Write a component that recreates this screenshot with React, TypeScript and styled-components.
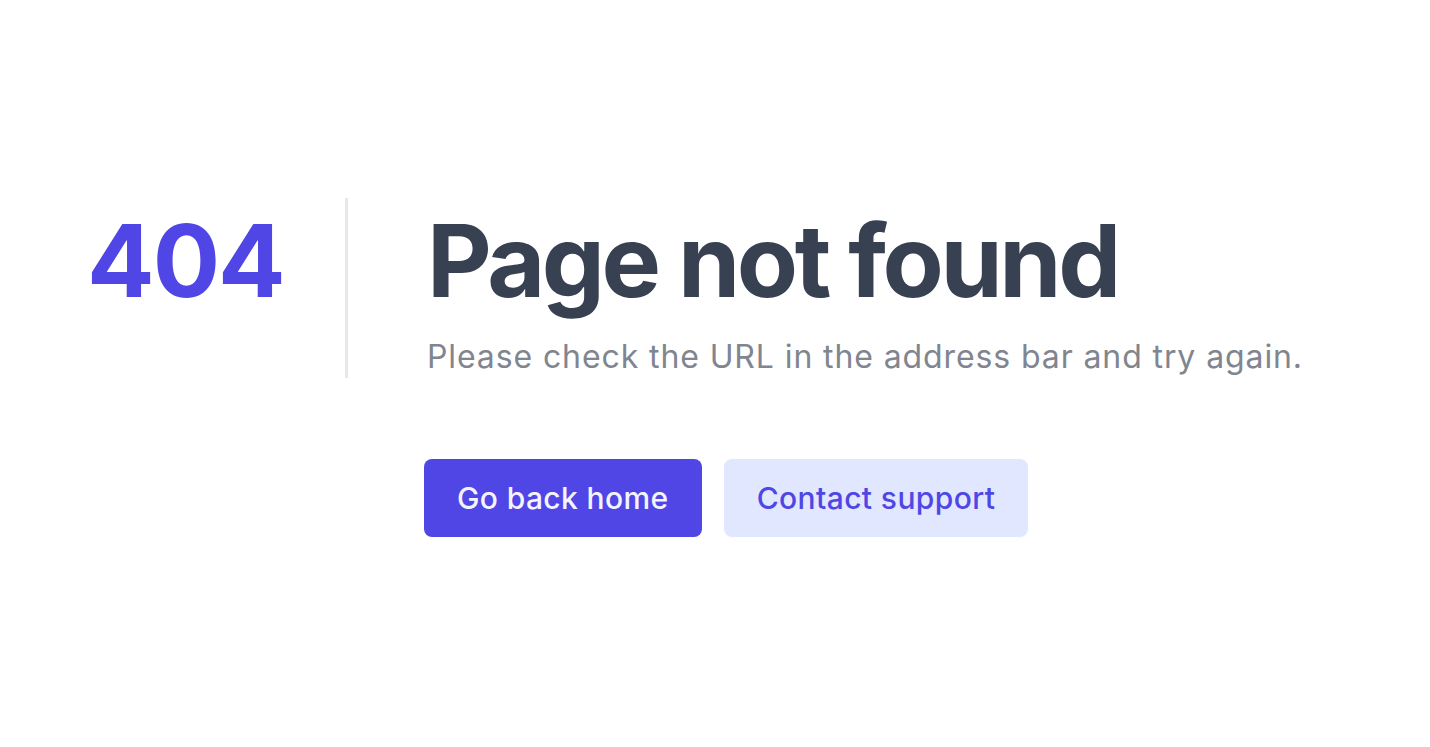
import React from "react";
import styled, {createGlobalStyle} from "styled-components";

const GlobalStyle = createGlobalStyle`
  html, body {
    margin: 0;
    padding: 0;
    background: #ffffff;
    font-family: Inter, "Noto Sans", "Liberation Sans", sans-serif;
  }
  * {
    box-sizing: border-box;
  }
`;

const App: React.FC = () => {
    return (
        <Page>
            <GlobalStyle/>
            <Main>
                <Code>404</Code>
                <Body>
                    <Header>
                        <Title>Page not found</Title>
                        <Subtitle>Please check the URL in the address bar and try again.</Subtitle>
                    </Header>
                    <Actions>
                        <Button variant="primary">Go back home</Button>
                        <Button variant="secondary">Contact support</Button>
                    </Actions>
                </Body>
            </Main>
        </Page>
    )
}

export default App

const Page = styled.div`
  min-height: 747px;
  padding: 198px 0 0 87px;
  background: #ffffff;
`;
const Main = styled.main`
  display: flex;
  align-items: flex-start;
`;
const Code = styled.p`
  margin: 0;
  width: 198px;
  font-size: 100px;
  line-height: 126px;
  font-weight: 700;
  color: #4f46e5;
  letter-spacing: -0.02em;
`;
const Body = styled.div`
  margin-left: 60px;
`;
const Header = styled.div`
  border-left: 3px solid #e5e7eb;
  padding-left: 79px;
`;
const Title = styled.h1`
  margin: 0;
  font-size: 100px;
  line-height: 126px;
  font-weight: 700;
  color: #374151;
  letter-spacing: -0.034em;
`;
const Subtitle = styled.p`
  margin: 12px 0 0 0;
  font-size: 32px;
  line-height: 42px;
  font-weight: 400;
  color: #80858f;
  letter-spacing: 0.028em;
`;
const Actions = styled.div`
  display: flex;
  gap: 22px;
  margin-top: 81px;
  padding-left: 79px;
`;
const Button = styled.a<{ variant: "primary" | "secondary" }>`
  display: inline-flex;
  align-items: center;
  height: 78px;
  padding: 0 33px;
  border-radius: 8px;
  font-size: 30px;
  line-height: 40px;
  font-weight: 500;
  letter-spacing: 0.013em;
  text-decoration: none;
  cursor: pointer;
  background: ${props => props.variant === "primary" ? "#4f46e5" : "#e0e7ff"};
  color: ${props => props.variant === "primary" ? "#f3f4ff" : "#4f46e5"};
`;
